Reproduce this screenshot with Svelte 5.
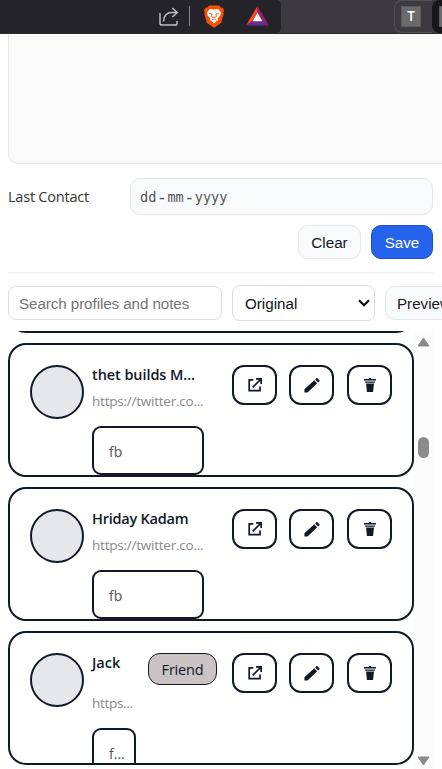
<script>
  const profiles = [
    { name: 'thet builds M...', nameSpacing: -0.08, url: 'https://twitter.co...', urlSpacing: -0.23, note: 'fb' },
    { name: 'Hriday Kadam', nameSpacing: -0.23, url: 'https://twitter.co...', urlSpacing: -0.23, note: 'fb' },
    { name: 'Jack', nameSpacing: 0, url: 'https...', urlSpacing: -0.3, note: 'f...', tag: 'Friend' }
  ];
</script>

<div class="screen">
  <header class="browser">
    <div class="address">
      <svg class="share" width="20" height="20" viewBox="0 0 20 20" fill="none" stroke="#bdbcc1" stroke-width="1.5">
        <path d="M1 6v10.2q0 1.8 1.8 1.8h13.4q1.8 0 1.8-1.8V14" />
        <path d="M4.5 14.5C4.8 8.7 8 5.5 13 5.5h5M13.3 1l5 4.5-5 4.5" />
      </svg>
      <span class="sep"></span>
      <svg class="brave" width="20" height="23" viewBox="0 0 20 23">
        <path fill="#fb4f08" d="M5 .5h10l2 2.2 1.6-.3L20 5.2l-.8 2.2.5 1.5-2.7 9L10 22.7 3 17.9.3 8.9l.5-1.5L0 5.2l1.4-2.8 1.6.3z" />
        <path fill="#fff" d="M5.8 4 10 4.6 14.2 4 17 7.5l-.7 3-2.5 2.8.3 2-1.6.7L10 18.5 7.5 16l-1.6-.7.3-2-2.5-2.8-.7-3z" />
        <path stroke="#fb4f08" stroke-width=".9" fill="none" d="m5.2 8.3 3 .9-.7 2.2L10 13l2.5-1.6-.7-2.2 3-.9M7.5 15.2 10 14l2.5 1.2" />
      </svg>
      <svg class="bat" width="23" height="20" viewBox="0 0 23 20">
        <path fill="#ff4724" d="M11.5 0v6.5L6.3 15 0 19.5z" />
        <path fill="#9e1f63" d="M11.5 0 23 19.5 16.7 15 11.5 6.5z" />
        <path fill="#662d91" d="M0 19.5 6.3 15h10.4l6.3 4.5z" />
        <path fill="#fff" d="m11.5 6.5 5 8.8h-10z" />
      </svg>
    </div>
    <div class="tabs"><span class="tab"><b>T</b></span><span class="tab next"><b></b></span></div>
  </header>

  <div class="area"></div>

  <div class="field">
    <label for="last">Last Contact</label>
    <div class="date" id="last"><span>dd</span><i>-</i><span>mm</span><i>-</i><span>yyyy</span></div>
  </div>

  <div class="actions">
    <button class="clear">Clear</button>
    <button class="save">Save</button>
  </div>

  <div class="filters">
    <div class="search">Search profiles and notes</div>
    <div class="select"><span>Original</span>
      <svg width="12" height="8" viewBox="0 0 12 8" fill="none" stroke="#111" stroke-width="2.2"><path d="m1 1.2 5 5 5-5" /></svg>
    </div>
    <button class="preview">Preview</button>
  </div>

  <div class="list">
    <div class="cards">
      <div class="card previous"></div>
      {#each profiles as p}
        <article class="card">
          <div class="avatar"></div>
          <div class="info">
            <div class="head" class:tagged={p.tag}>
              <strong style="letter-spacing:{p.nameSpacing}px">{p.name}</strong>
              {#if p.tag}<span class="tag">{p.tag}</span>{/if}
            </div>
            <div class="url" style="letter-spacing:{p.urlSpacing}px">{p.url}</div>
            <div class="note" class:small={p.tag}>{p.note}</div>
          </div>
          <div class="tools">
            <button aria-label="Open">
              <svg width="16" height="16" viewBox="0 0 16 16" fill="none" stroke="#111827" stroke-width="1.7"><path d="M6.3 2.8H2.2v10.8H13V9.5M9 1.8h5.2V7M14 2 5.7 10.3" /></svg>
            </button>
            <button aria-label="Edit">
              <svg width="16" height="16" viewBox="0 0 16 16" fill="#111827"><path d="M.4 15.5v-3.2L10.2 3.2l3 3L3.6 15.5zM11.1 2.4 12.9.7l3 3-1.8 1.7z" /></svg>
            </button>
            <button aria-label="Delete" class="trash">
              <svg width="16" height="16" viewBox="0 0 16 16" fill="#111827"><path d="M2 2h4.5l.7-1h1.6l.7 1H14v1.4H2z" /><path d="M3 4.6h10v1.2H3z" /><path d="M4 6.5h8L11 15H5z" /></svg>
            </button>
          </div>
        </article>
      {/each}
    </div>
    <div class="scroll">
      <svg width="13" height="10" viewBox="0 0 13 10"><path d="M6.5 1 12 9H1z" fill="#8b8b8b" stroke="#8b8b8b" stroke-linejoin="round" /></svg>
      <span class="thumb"></span>
      <svg class="down" width="13" height="10" viewBox="0 0 13 10"><path d="M1 1h11L6.5 9z" fill="#8b8b8b" stroke="#8b8b8b" stroke-linejoin="round" /></svg>
    </div>
  </div>
</div>

<style>
  :global(body) { margin: 0; overflow: hidden; }
  .screen, .screen * { box-sizing: border-box; }
  .screen { width: 442px; height: 769px; overflow: hidden; background: #fff; color: #111827; font-family: 'Open Sans', 'Noto Sans', sans-serif; display: flex; flex-direction: column; }
  .screen > * { flex-shrink: 0; }
  button { margin: 0; padding: 0; font: 15.2px 'Liberation Sans', Arial, sans-serif; color: #111827; background: #fff; white-space: nowrap; }
  svg { display: block; flex-shrink: 0; }

  .browser { height: 34px; display: flex; background: #3c3a40; border-bottom: 1px solid #2d2b31; }
  .address { width: 281px; height: 33px; background: #242329; border-radius: 0 5px 5px 0; display: flex; align-items: flex-start; padding-left: 159px; }
  .share { margin-top: 7px; }
  .sep { width: 1px; height: 20px; margin: 6px 0 0 10px; background: #8a888f; }
  .brave { margin: 5px 0 0 14px; }
  .bat { margin: 6px 0 0 22px; }
  .tabs { flex: 1; display: flex; padding-left: 113px; overflow: hidden; }
  .tab { flex: none; width: 38px; height: 33px; border: 1px solid #515056; border-right: 0; border-radius: 8px 0 0 8px; padding: 5px 0 0 6px; }
  .tab b { display: block; width: 20px; height: 21px; background: #6b6b6b; border: 1px solid #5c5c5c; color: #fff; font: 600 13.5px/19px 'Open Sans', sans-serif; text-align: center; }
  .next { background: #171719; border-color: #171719; padding-left: 6px; }

  .area { height: 130px; width: 500px; margin-left: 8px; background: #fafafa; border: 1px solid #e5e7eb; border-top: 0; border-radius: 0 0 10px 10px; }
  .field { margin: 14px 9px 0 8px; height: 37px; display: flex; align-items: center; }
  label { width: 122px; font-size: 14.5px; letter-spacing: -.22px; color: #333; }
  .date { flex: 1; height: 37px; border: 1px solid #e5e7eb; border-radius: 10px; background: #f9fafb; padding-left: 9px; display: flex; align-items: center; font: 13.6px 'DejaVu Sans Mono', 'Liberation Mono', monospace; color: #555; }
  .date i { font-style: normal; font-size: 17px; width: 11px; text-align: center; }
  .actions { margin: 10px 9px 0 8px; height: 48px; display: flex; justify-content: flex-end; gap: 10px; border-bottom: 1px solid #eee; }
  .actions button { height: 34px; border: 1px solid #e5e7eb; border-radius: 10px; background: #f9fafb; width: 63px; padding-top: 1px; }
  .actions .save { width: 62px; background: #2563eb; border-color: #1d4ed8; color: #fff; }
  .filters { margin: 12px 0 0 8px; height: 36px; display: flex; align-items: center; gap: 10px; font: 15.2px 'Liberation Sans', Arial, sans-serif; }
  .search { flex: none; width: 214px; height: 34px; border: 1px solid #ddd; border-radius: 8px; padding-left: 10px; line-height: 34px; letter-spacing: -.08px; color: #757575; }
  .select { flex: none; width: 143px; height: 36px; border: 1px solid #ddd; border-radius: 8px; padding: 0 4px 0 12px; display: flex; align-items: center; justify-content: space-between; color: #111; }
  .select span { padding-top: 1px; }
  .preview { flex: none; width: 78px; height: 34px; padding-top: 1px; border: 1px solid #e5e7eb; border-radius: 10px; background: #f9fafb; }

  .list { margin: 10px 9px 0 8px; height: 438px; overflow: hidden; display: flex; }
  .cards { width: 406px; height: 438px; display: flex; flex-direction: column; gap: 10px; overflow: hidden; }
  .card { flex: none; height: 134px; border: 2px solid #111827; border-radius: 18px; padding: 20px; display: flex; overflow: hidden; }
  .previous { margin-top: -132px; }
  .avatar { flex: none; width: 54px; height: 54px; border: 2px solid #111827; border-radius: 50%; background: #e5e7eb; }
  .info { width: 140px; margin-left: 8px; flex: none; white-space: nowrap; }
  .head { height: 20px; display: flex; justify-content: space-between; }
  .head.tagged { height: 32px; width: 125px; }
  strong { font: 600 14.5px/20px 'Open Sans', 'Noto Sans', sans-serif; }
  .tag { width: 69px; height: 32px; border: 1px solid #111827; border-radius: 12px; background: #cac3c3; font-size: 14.5px; letter-spacing: -.2px; line-height: 32px; text-align: center; }
  .url { margin-top: 6px; height: 20px; line-height: 20px; font-size: 13.5px; color: #888; }
  .note { width: 112px; height: 49px; margin-top: 15px; border: 2px solid #111827; border-radius: 9px; padding-left: 15px; line-height: 47px; font-size: 14px; color: #555; }
  .tagged + .url { margin-top: 8px; }
  .tools { display: flex; gap: 12px; }
  .note.small { width: 44px; }
  .tools button { width: 45px; height: 40px; border: 2px solid #111827; border-radius: 12px; display: flex; align-items: center; justify-content: center; }
  .tools .trash { margin-left: 1px; }
  .scroll { width: 19px; background: #fcfcfc; display: flex; flex-direction: column; align-items: center; padding-top: 6px; }
  .thumb { width: 11px; height: 21px; border-radius: 6px; background: #8b8b8b; margin-top: 90px; }
  .down { margin-top: 298px; }
</style>
